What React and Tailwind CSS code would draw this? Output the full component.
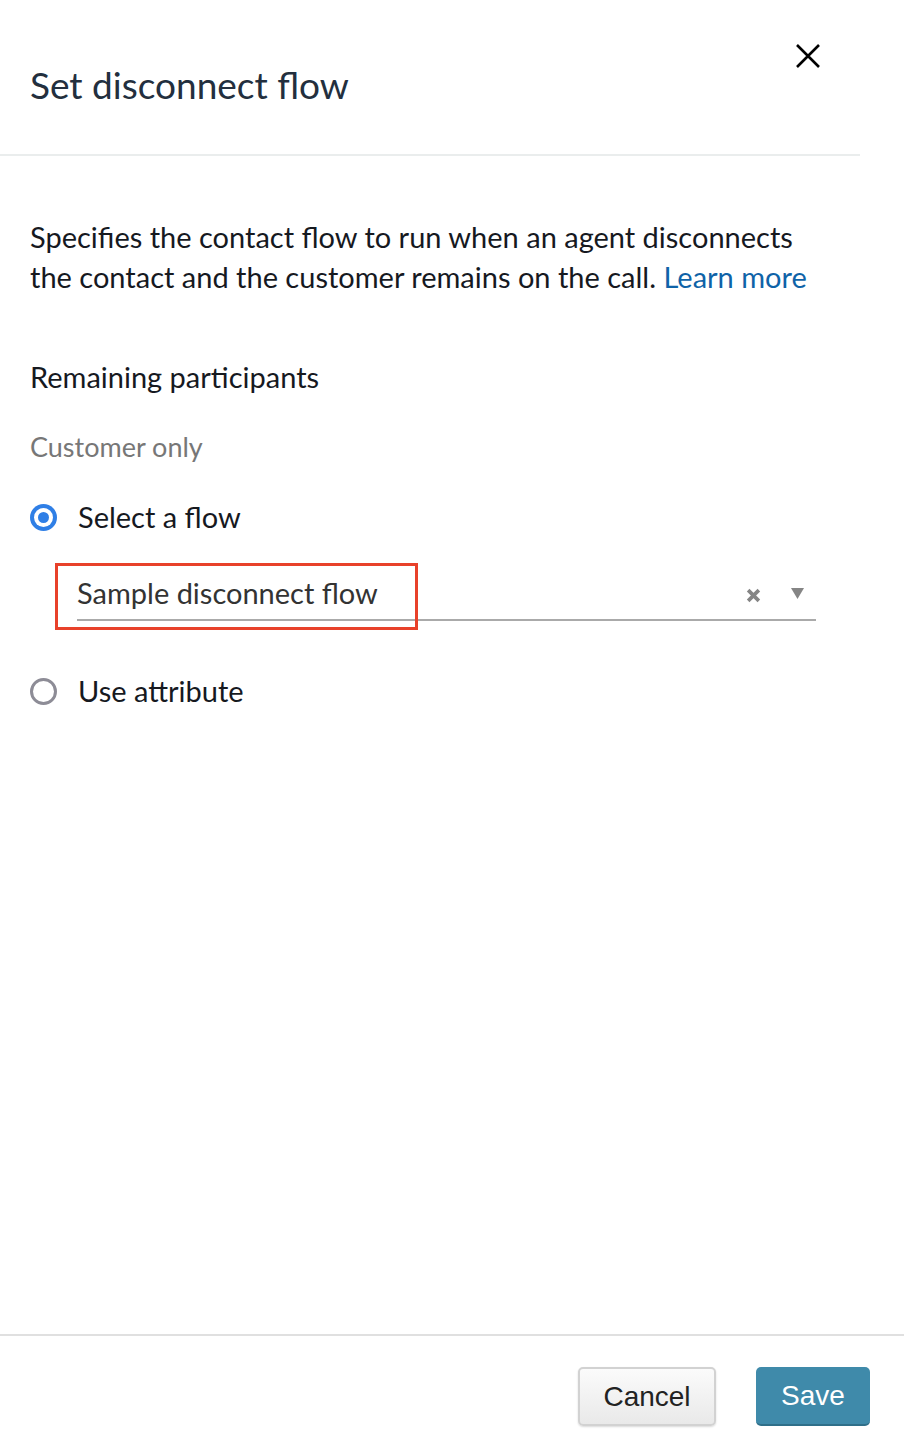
import React from "react";

export default function App() {
  const f = { fontFamily: "Lato, 'Noto Sans', sans-serif" };
  return (
    <div className="w-[904px] h-[1454px] bg-white flex flex-col text-[#16191f]" style={f}>
      <div className="w-[860px] border-b-2 border-[#eaeded] h-[156px] flex justify-between pl-[30px] pr-[40px]">
        <h1 className="text-[37px] leading-none mt-[66px] text-[#232f3e] font-normal">Set disconnect flow</h1>
        <svg width="24" height="24" viewBox="0 0 24 24" className="mt-[44px]">
          <path d="M1 1L23 23M23 1L1 23" stroke="#000" strokeWidth="2.6" />
        </svg>
      </div>
      <div className="flex-1 px-[30px] pt-[61px]">
        <p className="text-[29px] leading-[40px] text-[#16191f] whitespace-nowrap">
          Specifies the contact flow to run when an agent disconnects
          <br />
          the contact and the customer remains on the call.{" "}
          <span className="text-[#0f63a8]">Learn more</span>
        </p>
        <div className="text-[29px] mt-[60px] leading-[40px]">Remaining participants</div>
        <div className="text-[27px] mt-[30px] leading-[40px] text-[#777]">Customer only</div>
        <div className="flex items-center mt-[30px] h-[40px]">
          <div className="w-[27px] h-[27px] rounded-full bg-[#2f7fe6] flex items-center justify-center">
            <div className="w-[19px] h-[19px] rounded-full bg-white flex items-center justify-center">
              <div className="w-[11px] h-[11px] rounded-full bg-[#2f7fe6]" />
            </div>
          </div>
          <span className="text-[29px] ml-[21px]">Select a flow</span>
        </div>
        <div className="relative ml-[47px] mt-[28px] w-[739px] h-[56px] flex items-end border-b-2 border-[#aaaaaa]">
          <span className="text-[29px] leading-[44px] mb-[4px] text-[#333]">Sample disconnect flow</span>
          <div className="ml-auto flex items-center gap-[30px] mb-[16px] mr-[12px]">
            <svg width="15" height="15" viewBox="0 0 14 14">
              <path d="M2 2L12 12M12 2L2 12" stroke="#858585" strokeWidth="3.4" />
            </svg>
            <svg width="13" height="11" viewBox="0 0 13 11" className="mb-[4px]">
              <path d="M0 0H13L6.5 11Z" fill="#858585" />
            </svg>
          </div>
          <div className="absolute left-[-22px] top-[-2px] w-[363px] h-[67px] border-[3px] border-[#e8412a]" />
        </div>
        <div className="flex items-center mt-[50px] h-[40px]">
          <div className="w-[27px] h-[27px] rounded-full border-[3px] border-[#8d8c96]" />
          <span className="text-[29px] ml-[21px]">Use attribute</span>
        </div>
      </div>
      <div className="border-t-2 border-[#e0e0e0] h-[120px] flex justify-end items-start pt-[31px] pr-[34px] gap-[40px]" style={{ fontFamily: "'Liberation Sans', Arial, sans-serif" }}>
        <button className="w-[138px] h-[59px] rounded-[5px] border-2 border-[#d2d2d2] bg-gradient-to-b from-[#fbfbfb] to-[#e9e9e9] text-[28px] text-[#222] shadow-[0_1px_2px_rgba(0,0,0,0.15)]">Cancel</button>
        <button className="w-[114px] h-[59px] rounded-[5px] bg-[#3f8aaa] border-b-2 border-[#2f6f89] text-[28px] text-white">Save</button>
      </div>
    </div>
  );
}
